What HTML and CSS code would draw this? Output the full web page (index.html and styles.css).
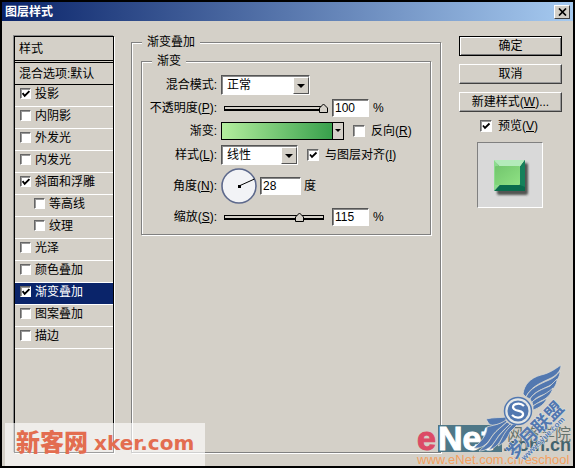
FILE: index.html
```html
<!DOCTYPE html>
<html lang="zh-CN">
<head>
<meta charset="utf-8">
<title>图层样式</title>
<link rel="stylesheet" href="styles.css">
</head>
<body>
<div class="dialog">
  <header class="titlebar">
    <h1>图层样式</h1>
    <button class="close" type="button" aria-label="关闭"><svg width="9" height="8" viewBox="0 0 9 8"><path d="M1 0.5L8 7.5M8 0.5L1 7.5" stroke="#000" stroke-width="1.7"/></svg></button>
  </header>
  <main class="content">
    <nav class="styles">
      <div class="styles-head">样式</div>
      <div class="styles-blend">混合选项:默认</div>
      <label class="item"><input type="checkbox" checked>投影</label>
      <label class="item"><input type="checkbox">内阴影</label>
      <label class="item"><input type="checkbox">外发光</label>
      <label class="item"><input type="checkbox">内发光</label>
      <label class="item"><input type="checkbox" checked>斜面和浮雕</label>
      <label class="item sub"><input type="checkbox">等高线</label>
      <label class="item sub"><input type="checkbox">纹理</label>
      <label class="item"><input type="checkbox">光泽</label>
      <label class="item"><input type="checkbox">颜色叠加</label>
      <label class="item selected"><input type="checkbox" checked>渐变叠加</label>
      <label class="item"><input type="checkbox">图案叠加</label>
      <label class="item"><input type="checkbox">描边</label>
    </nav>
    <fieldset class="panel">
      <legend>渐变叠加</legend>
      <fieldset class="group">
        <legend>渐变</legend>
        <div class="form">
          <label class="name" for="mode">混合模式:</label>
          <div class="field"><span class="combo wide"><select id="mode"><option>正常</option></select><i class="arrow"></i></span></div>
          <label class="name" for="opacity">不透明度(<u>P</u>):</label>
          <div class="field slide"><input type="range" id="opacity" min="0" max="100" value="100"><input class="num" type="text" value="100" aria-label="不透明度数值"><span>%</span></div>
          <label class="name" for="gradient">渐变:</label>
          <div class="field"><button class="gradient" id="gradient" type="button"><span class="ramp"></span><span class="drop"></span></button><label class="check"><input type="checkbox"><span>反向(<u>R</u>)</span></label></div>
          <label class="name" for="style">样式(<u>L</u>):</label>
          <div class="field"><span class="combo"><select id="style"><option>线性</option></select><i class="arrow"></i></span><label class="check"><input type="checkbox" checked><span>与图层对齐(<u>I</u>)</span></label></div>
          <label class="name" for="angle">角度(<u>N</u>):</label>
          <div class="field angle"><svg width="36" height="36" viewBox="0 0 36 36"><circle cx="18" cy="18" r="17" fill="#f2f3f6" stroke="#5d698c" stroke-width="1.6"/><path d="M18 18L33.500 11" stroke="#000" stroke-width="1"/><rect x="17" y="17" width="3" height="3"/></svg><input class="num mid" type="text" id="angle" value="28"><span>度</span></div>
          <label class="name" for="scale">缩放(<u>S</u>):</label>
          <div class="field slide"><input type="range" id="scale" min="10" max="150" value="115"><input class="num" type="text" value="115" aria-label="缩放数值"><span>%</span></div>
        </div>
      </fieldset>
    </fieldset>
    <aside class="actions">
      <button class="btn default" type="button">确定</button>
      <button class="btn" type="button">取消</button>
      <button class="btn" type="button">新建样式(<u>W</u>)...</button>
      <label class="check preview-check"><input type="checkbox" checked><span>预览(<u>V</u>)</span></label>
      <div class="preview">
        <svg width="64" height="64" viewBox="0 0 64 64">
          <defs>
            <linearGradient id="face" x1="0" y1="0" x2="1" y2="1"><stop offset="0" stop-color="#72c66d"/><stop offset="1" stop-color="#8fe184"/></linearGradient>
            <filter id="soft" x="-20%" y="-20%" width="150%" height="150%"><feGaussianBlur stdDeviation="1.200"/></filter>
          </defs>
          <rect x="19" y="20" width="31" height="32" rx="2" fill="#303532" opacity=".8" filter="url(#soft)"/>
          <path d="M16 17H47L42 24H22Z" fill="#b3ebba"/>
          <path d="M16 17L22 24V42L16 48Z" fill="#8bdc8d"/>
          <path d="M47 17V48H16L22 42H42V24Z" fill="#096b4d"/>
          <path d="M47 17V44L42 42V24Z" fill="#16815b"/>
          <rect x="17" y="23" width="25" height="19" rx="1" fill="url(#face)"/>
        </svg>
      </div>
    </aside>
  </main>
  <div class="mark-left"><span class="cn">新客网</span><span class="en">xker.com</span></div>
  <svg class="mark-right" width="160" height="106" viewBox="415 361 160 106">
    <rect x="438" y="425" width="64" height="27" fill="#4e7787"/>
    <g class="enet">
      <text x="417" y="450" font-size="34" fill="#dc4b66" stroke="#dc4b66">e</text>
      <text x="438" y="450" font-size="34" fill="#fff" stroke="#fff">Net</text>
      <text class="domain" x="503" y="451" font-size="18" fill="#42636e">.com.cn</text>
    </g>
    <text class="school" x="507" y="440" font-size="16" fill="#66736d">网络学院</text>
    <text class="url" x="417" y="464" font-size="13" fill="#f3a05f">www.eNet.com.cn/eschool</text>
    <g fill="#5278b0" stroke="#d8d8d3" stroke-width=".8">
      <path d="M523 394C524 385 530 378 541 375C550 373 555 369 561 365C561 371 556 376 549 379C538 384 530 388 526 397Z"/>
      <path d="M526 397C530 388 540 384 549 380C554 378 557 375 560 371C560 378 556 382 549 386C540 390 533 393 530 399Z"/>
      <path d="M530 399C534 392 543 389 550 386L557 379C557 386 552 391 546 394C539 396 535 398 532 403Z"/>
      <path d="M532 402C537 397 544 396 553 388C551 395 546 399 541 401L533 406Z"/>
      <path d="M533 406C538 402 542 402 547 398C545 404 539 408 533 410Z"/>
      <path d="M506 417C501 418 494 417 486 419L489 424C493 427 500 424 506 421Z"/>
      <path d="M506 420C499 425 493 425 487 427C487 436 480 442 474 448C482 449 487 444 491 438C494 432 500 428 507 422Z"/>
      <path d="M507 422C500 428 494 433 491 438C488 444 483 447 479 451C487 451 492 446 496 440C499 434 504 430 510 424Z"/>
      <path d="M510 424C504 430 499 435 496 440L489 450C496 448 500 442 503 437L513 425Z"/>
      <path d="M513 424C507 429 504 434 502 438L498 446C505 443 508 437 510 432L517 425Z"/>
    </g>
    <circle cx="518" cy="411" r="13.500" fill="#e3e6e6" stroke="#5278b0" stroke-width="1.500"/>
    <circle cx="518" cy="411" r="10.500" fill="#5278b0"/>
    <path d="M524 406C519 401 510 405 514 409C517 412 524 410 523 415C521 419 515 418 512 415" fill="none" stroke="#fff" stroke-width="2.300"/>
    <g class="union" transform="translate(514 460) rotate(-45)">
      <text x="0" y="0" font-size="18">岁月联盟</text>
      <text class="syue" x="7" y="8" font-size="8">www.syue.com</text>
    </g>
  </svg>
</div>
</body>
</html>
```
FILE: styles.css
```css
* { box-sizing: border-box; }
body {
  margin: 0;
  background: #000;
  color: #000;
  font: 12px/16px "Liberation Sans", "Noto Sans CJK SC", sans-serif;
}
button, input, select { font: inherit; color: inherit; }
u { text-underline-offset: 1px; }

.dialog {
  position: relative;
  display: flex;
  flex-direction: column;
  min-height: 100vh;
  border: 2px solid #000;
  background: #d4d0c8;
  overflow: hidden;
}
.titlebar {
  display: flex;
  align-items: center;
  justify-content: space-between;
  height: 19px;
  padding: 0 3px;
  background: linear-gradient(90deg, #0a246a, #a6caf0);
}
h1 { margin: 0; color: #fff; font-size: 12px; line-height: 16px; }
.close {
  display: flex;
  align-items: center;
  justify-content: center;
  width: 16px;
  height: 14px;
  padding: 0;
  border: 1px solid;
  border-color: #fff #404040 #404040 #fff;
  background: #d4d0c8;
}
.content {
  flex: 1;
  display: flex;
  align-items: stretch;
  padding: 15px 11px 13px 12px;
}

.styles {
  width: 100px;
  border: 1px solid #000;
  box-shadow: -1px -1px #888, 1px 1px #fff;
}
.styles-head { height: 26px; padding: 4px; border-bottom: 3px double #000; }
.styles-blend { height: 22px; padding: 3px 4px; border-bottom: 1px solid #000; }
.item {
  display: flex;
  align-items: center;
  gap: 4px;
  height: 22px;
  padding-left: 5px;
  padding-bottom: 4px;
  border-bottom: 1px solid #fff;
}
.sub { padding-left: 19px; }
.selected { background: #0a246a; color: #fff; }

input[type="checkbox"] {
  appearance: none;
  flex: none;
  width: 12px;
  height: 12px;
  margin: 0;
  border: 1px solid;
  border-color: #666 #fff #fff #666;
  background: #fff;
  box-shadow: inset 1px 1px #999;
}
input[type="checkbox"]:checked {
  background: #fff url("data:image/svg+xml,%3Csvg xmlns='http://www.w3.org/2000/svg' width='10' height='10'%3E%3Cpath d='M2 4.500L4 7L8.500 2.500' fill='none' stroke='black' stroke-width='1.800'/%3E%3C/svg%3E") center no-repeat;
}
.item input[type="checkbox"] { width: 11px; height: 11px; }

fieldset {
  min-width: 0;
  margin: 0;
  padding: 0;
  border: 1px solid #808080;
  box-shadow: 1px 1px #fff, inset 1px 1px #fff;
}
legend { padding: 0 5px; line-height: 16px; background: #d4d0c8; }
.panel { flex: 1; margin: -2px 18px 0 17px; padding: 0 9px; }
.panel > legend { margin-left: 1px; }
.group { margin-top: 3px; padding-bottom: 4px; }
.group > legend { margin-left: 10px; }
.form {
  display: grid;
  grid-template-columns: 75px 1fr;
  grid-template-rows: 22px 24px 22px 26px 36px 26px;
  column-gap: 4px;
  align-items: center;
  margin-top: 5px;
}
.name { text-align: right; white-space: nowrap; }
.field { display: flex; align-items: center; white-space: nowrap; }

.combo { position: relative; display: flex; width: 77px; height: 20px; }
.combo.wide { width: 89px; }
select {
  appearance: none;
  width: 100%;
  padding: 0 18px 0 5px;
  border: 1px solid;
  border-color: #555 #fff #fff #555;
  border-radius: 0;
  background: #fff;
  box-shadow: inset 1px 1px #888;
}
.arrow {
  position: absolute;
  top: 2px;
  right: 1px;
  bottom: 1px;
  width: 16px;
  border: 1px solid;
  border-color: #fff #555 #555 #fff;
  background: #d4d0c8;
  pointer-events: none;
}
.arrow::after, .drop::after {
  content: "";
  display: block;
  width: 8px;
  height: 4px;
  margin: 6px auto 0;
  background: #000;
  clip-path: polygon(0 0, 100% 0, 50% 100%);
}

.slide { padding-left: 3px; gap: 4px; }
input[type="range"] {
  appearance: none;
  width: 104px;
  height: 12px;
  margin: 0;
  background: linear-gradient(#000, #000) 0 4px / 100px 1px no-repeat,
    linear-gradient(#000, #000) 0 7px / 100px 2px no-repeat,
    linear-gradient(#000, #000) 0 4px / 1px 5px no-repeat,
    linear-gradient(#000, #000) 99px 4px / 1px 5px no-repeat;
}
input[type="range"]::-webkit-slider-thumb {
  appearance: none;
  width: 9px;
  height: 11px;
  background: url("data:image/svg+xml,%3Csvg xmlns='http://www.w3.org/2000/svg' width='9' height='11'%3E%3Cpath d='M.5 9.500V5L4.500 1L8.500 5V9.500Z' fill='%23d4d0c8' stroke='black'/%3E%3C/svg%3E") no-repeat;
}
.num {
  width: 37px;
  height: 18px;
  padding: 0 2px;
  border: 1px solid;
  border-color: #555 #fff #fff #555;
  background: #fff;
  box-shadow: inset 1px 1px #888;
}
.num.mid { width: 41px; }
.angle { gap: 3px; }
.angle svg { display: block; }
.gradient {
  display: flex;
  width: 123px;
  height: 18px;
  padding: 0;
  border: 1px solid #000;
  background: #d4d0c8;
}
.ramp { flex: 1; background: linear-gradient(90deg, #b4ee9e, #38a04c); }
.drop { width: 11px; border-left: 1px solid #000; }
.drop::after { width: 6px; height: 3px; }
.check { display: flex; align-items: center; gap: 6px; margin-left: 9px; white-space: nowrap; }

.actions { width: 103px; display: flex; flex-direction: column; gap: 8px; }
.btn {
  height: 20px;
  padding: 0;
  border: 1px solid;
  border-color: #fff #404040 #404040 #fff;
  background: #d4d0c8;
  box-shadow: inset -1px -1px #999;
  line-height: 16px;
}
.btn.default { border-color: #000; box-shadow: inset 1px 1px #fff, inset -1px -1px #777; }
.preview-check { margin: -2px 0 0 21px; }
.preview {
  width: 66px;
  height: 66px;
  margin-left: 18px;
  border: 1px solid;
  border-color: #808080 #fff #fff #808080;
  background: #d9d9d9;
}
.preview svg { display: block; }

.mark-left {
  position: absolute;
  left: 3px;
  bottom: 0;
  display: flex;
  gap: 6px;
  height: 43px;
  padding: 5px 11px 0 11px;
  background: rgba(255, 255, 255, .62);
  color: #e36d50;
  font-weight: bold;
  line-height: 30px;
  white-space: nowrap;
}
.cn { font-size: 24px; font-weight: 900; }
.en { font-family: "DejaVu Sans", sans-serif; font-size: 20px; }
.mark-right { position: absolute; right: -2px; bottom: -1px; pointer-events: none; }
.enet { font-family: "Liberation Sans", sans-serif; font-weight: 900; stroke-width: 1px; }
.domain { stroke: none; }
.school { font-family: "Noto Sans CJK SC", sans-serif; font-weight: normal; }
.url { font-family: "Liberation Sans", sans-serif; }
.union { font-family: "Noto Sans CJK SC", sans-serif; font-weight: bold; fill: #5278b0; stroke: #dce0e2; stroke-width: 1px; paint-order: stroke; }
.syue { font-family: "Liberation Sans", sans-serif; }
```
